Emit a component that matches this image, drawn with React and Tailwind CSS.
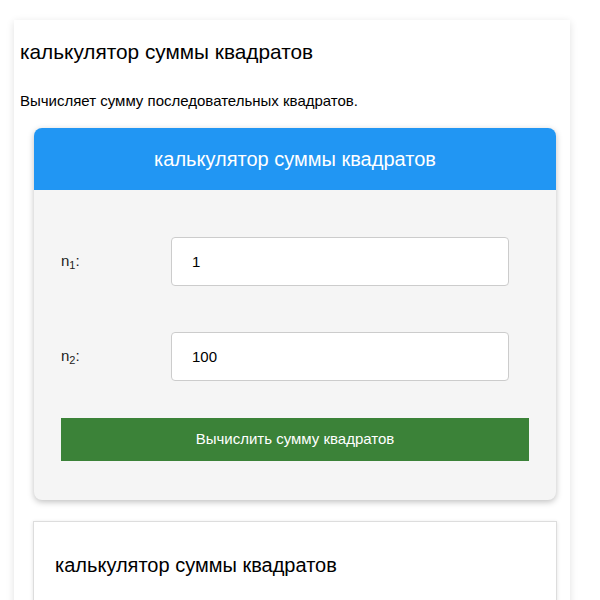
import React, { useState } from "react";

function Field({ label, sub, value, onChange }) {
  return (
    <div className="flex items-center h-[49px]">
      <label className="w-[110px] text-[15px] text-[#222]">
        {label}
        <sub className="text-[11px]">{sub}</sub>:
      </label>
      <input
        type="text"
        className="w-[338px] h-[49px] bg-white border border-[#cccccc] rounded-[4px] px-[20px] text-[15px] text-black outline-none"
        value={value}
        onChange={onChange}
      />
    </div>
  );
}

export default function App() {
  const [n1, setN1] = useState("1");
  const [n2, setN2] = useState("100");

  return (
    <div
      className="h-screen overflow-y-scroll bg-white"
      style={{ fontFamily: '"Liberation Sans", Arial, sans-serif' }}
    >
      <div className="h-[1527px] pt-[20px]">
        <div className="w-[556px] ml-[14px] bg-white shadow-[0_2px_8px_rgba(0,0,0,0.12)] pb-[40px]">
          <h1 className="pl-[6px] pt-[20px] text-[20.8px] leading-[24px] text-black">
            калькулятор суммы квадратов
          </h1>
          <p className="pl-[6px] mt-[28px] text-[15px] leading-[17px] text-black">
            Вычисляет сумму последовательных квадратов.
          </p>

          <div className="ml-[20px] mt-[19px] w-[522px] rounded-[8px] bg-[#f5f5f5] shadow-[0_2px_6px_rgba(0,0,0,0.25)] overflow-hidden">
            <div className="bg-[#2196f3] h-[62px] flex items-center justify-center">
              <h2 className="text-white text-[20px]">калькулятор суммы квадратов</h2>
            </div>
            <div className="px-[27px] pt-[47px] pb-[39px]">
              <Field label="n" sub="1" value={n1} onChange={(e) => setN1(e.target.value)} />
              <div className="mt-[46px]">
                <Field label="n" sub="2" value={n2} onChange={(e) => setN2(e.target.value)} />
              </div>
              <button className="mt-[37px] w-[468px] h-[43px] bg-[#3b8238] text-white text-[15px]">
                Вычислить сумму квадратов
              </button>
            </div>
          </div>

          <div className="ml-[19px] mt-[21px] w-[524px] h-[300px] bg-white border border-[#dddddd] shadow-[0_1px_4px_rgba(0,0,0,0.12)] px-[21px] pt-[28px]">
            <h2 className="text-[20px] text-black">калькулятор суммы квадратов</h2>
          </div>
          <div className="h-[560px]"></div>
        </div>
      </div>
    </div>
  );
}
